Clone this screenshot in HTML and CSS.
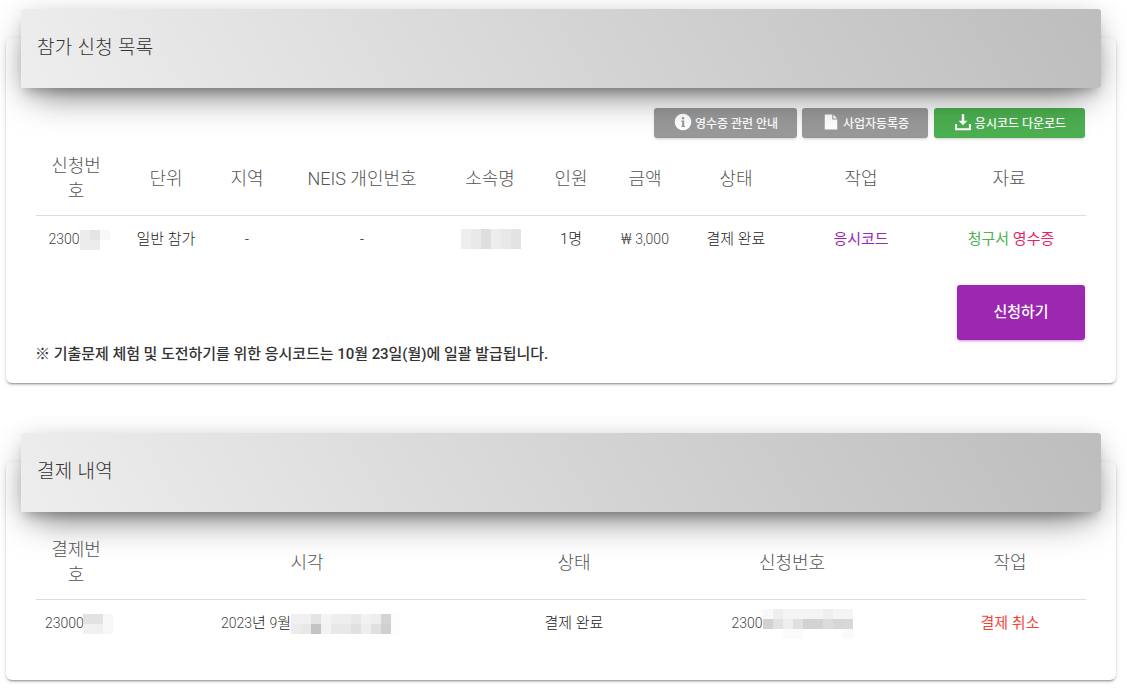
FILE: index.html
```html
<!DOCTYPE html>
<html lang="ko">
<head>
<meta charset="utf-8">
<title>참가 신청 목록</title>
<link rel="stylesheet" href="styles.css">
</head>
<body>
<main class="page">
  <section class="card card-first">
    <header class="card-header"><h2>참가 신청 목록</h2></header>
    <div class="card-body">
      <div class="toolbar">
        <button class="btn btn-gray btn-a">
          <svg class="icon" viewBox="0 0 24 24"><path fill="#fff" fill-rule="evenodd" d="M12 2a10 10 0 1 0 0 20 10 10 0 0 0 0-20zm1.500 5.400a1.500 1.500 0 1 1-3 0 1.500 1.500 0 0 1 3 0zM10 10.300h3.400v6.200h1v1.400H10v-1.400h1v-4.800h-1z"/></svg><span>영수증 관련 안내</span></button>
        <button class="btn btn-gray btn-b">
          <svg class="icon" viewBox="0 0 24 24"><path fill="#fff" d="M4.500 3h9v6h6v12h-15zM14.800 3l4.700 4.700h-4.700z"/></svg><span>사업자등록증</span></button>
        <button class="btn btn-green btn-c">
          <svg class="icon" viewBox="0 0 24 24"><path fill="#fff" d="M10.500 2.500h3v8h3.800L12 16 6.700 10.500h3.800zM2.500 14.500h2.400v5.100h14.200v-5.100h2.400v7.500h-19z"/></svg><span>응시코드 다운로드</span></button>
      </div>
      <table class="table table-apply">
        <colgroup>
          <col class="a1"><col class="a2"><col class="a3"><col class="a4"><col class="a5"><col class="a6"><col class="a7"><col class="a8"><col class="a9"><col class="a10">
        </colgroup>
        <thead>
          <tr><th>신청번호</th><th>단위</th><th>지역</th><th>NEIS 개인번호</th><th>소속명</th><th>인원</th><th>금액</th><th>상태</th><th>작업</th><th>자료</th></tr>
        </thead>
        <tbody>
          <tr>
            <td class="shift"><span class="num">2300</span><svg class="blur" width="30" height="20" viewBox="0 0 3 2"><rect width="2" height="2" fill="#ececec"/><rect x="1" width="1" height="1" fill="#e4e4e4"/><rect x="2" width="1" height="1" fill="#f8f8f8"/></svg></td>
            <td>일반 참가</td>
            <td>-</td>
            <td>-</td>
            <td><svg class="blur blur-org" width="60" height="20" viewBox="0 0 6 2"><rect width="6" height="2" fill="#eeeeee"/><rect x="1" width="1" height="2" fill="#e9e9e9"/><rect x="2" width="1" height="2" fill="#dedede"/><rect x="3" width="1" height="2" fill="#ededed"/><rect x="4" width="1" height="2" fill="#e8e8e8"/><rect x="5" width="1" height="2" fill="#e3e3e3"/></svg></td>
            <td>1명</td>
            <td><span class="num">₩ 3,000</span></td>
            <td>결제 완료</td>
            <td><a class="link purple">응시코드</a></td>
            <td class="shift-docs"><a class="link green">청구서</a> <a class="link pink">영수증</a></td>
          </tr>
        </tbody>
      </table>
      <div class="apply-row">
        <p class="notice">※ 기출문제 체험 및 도전하기를 위한 응시코드는 10월 23일(월)에 일괄 발급됩니다.</p>
        <button class="btn-apply">신청하기</button>
      </div>
    </div>
  </section>

  <section class="card card-second">
    <header class="card-header"><h2>결제 내역</h2></header>
    <div class="card-body body-second">
      <table class="table table-pay">
        <colgroup>
          <col class="p1"><col class="p2"><col class="p3"><col class="p4"><col class="p5">
        </colgroup>
        <thead>
          <tr><th>결제번호</th><th>시각</th><th>상태</th><th>신청번호</th><th>작업</th></tr>
        </thead>
        <tbody>
          <tr>
            <td class="shift"><span class="num">2300</span><span class="num clip">0</span><svg class="blur" width="30" height="20" viewBox="0 0 3 2"><rect width="3" height="2" fill="#f0f0f0"/><rect width="2" height="1" fill="#e2e2e2"/><rect x="2" width="1" height="2" fill="#f8f8f8"/></svg></td>
            <td class="shift-time"><span class="num">2023</span>년 <span class="num">9</span>월<svg class="blur" width="110" height="20" viewBox="0 0 11 2"><rect width="11" height="2" fill="#fdfdfd"/><rect width="10" height="1" fill="#eeeeee"/><rect width="2" height="1" fill="#f0f0f0"/><rect x="2" width="1" height="1" fill="#e4e4e4"/><rect x="3" width="1" height="1" fill="#f4f4f4"/><rect x="6" width="1" height="1" fill="#e8e8e8"/><rect x="7" width="1" height="1" fill="#f2f2f2"/><rect x="9" width="1" height="1" fill="#d4d4d4"/><rect y="1" width="1" height="1" fill="#ececec"/><rect x="1" y="1" width="1" height="1" fill="#e8e8e8"/><rect x="2" y="1" width="1" height="1" fill="#c4c4c4"/><rect x="3" y="1" width="1" height="1" fill="#f2f2f2"/><rect x="4" y="1" width="2" height="1" fill="#e8e8e8"/><rect x="6" y="1" width="1" height="1" fill="#e0e0e0"/><rect x="7" y="1" width="1" height="1" fill="#eeeeee"/><rect x="8" y="1" width="1" height="1" fill="#e0e0e0"/><rect x="9" y="1" width="1" height="1" fill="#d0d0d0"/></svg></td>
            <td>결제 완료</td>
            <td><span class="num">2300</span><svg class="blur blur-tall" width="90" height="30" viewBox="0 0 9 3"><rect width="9" height="1" fill="#f4f4f4"/><rect width="1" height="1" fill="#f8f8f8"/><rect x="1" width="1" height="1" fill="#eeeeee"/><rect x="6" width="1" height="1" fill="#eeeeee"/><rect y="1" width="1" height="1" fill="#d2d2d2"/><rect x="1" y="1" width="1" height="1" fill="#e2e2e2"/><rect x="2" y="1" width="1" height="1" fill="#eeeeee"/><rect x="3" y="1" width="1" height="1" fill="#e0e0e0"/><rect x="4" y="1" width="2" height="1" fill="#d2d2d2"/><rect x="6" y="1" width="1" height="1" fill="#dcdcdc"/><rect x="7" y="1" width="1" height="1" fill="#d6d6d6"/><rect x="8" y="1" width="1" height="1" fill="#d8d8d8"/><rect y="2" width="9" height="1" fill="#fff"/><rect x="2" y="2" width="2" height="1" fill="#fbfbfb"/><rect x="8" y="2" width="1" height="1" fill="#fafafa"/></svg></td>
            <td><a class="link red">결제 취소</a></td>
          </tr>
        </tbody>
      </table>
    </div>
  </section>
</main>
</body>
</html>
```

FILE: styles.css
```css
* { box-sizing: border-box; }

html, body { margin: 0; background: #fff; }

body {
  font-family: Roboto, "Noto Sans CJK KR", sans-serif;
  color: #3c4858;
  font-size: 14px;
}

.page {
  padding: 38px 11px 17px 6px;
  display: flex;
  flex-direction: column;
  gap: 79px;
}

.card {
  background: #fff;
  border-radius: 6px;
  box-shadow: 0 2px 2px 0 rgba(0,0,0,.14), 0 3px 1px -2px rgba(0,0,0,.2), 0 1px 5px 0 rgba(0,0,0,.12);
}

.card-first { height: 345px; }
.card-second { height: 218px; }

.card-header {
  margin: -29px 15px 0;
  height: 79px;
  padding: 0 16px 1px;
  display: flex;
  align-items: center;
  border-radius: 3px;
  background: linear-gradient(60deg, #eeeeee, #bdbdbd);
  box-shadow: 0 16px 38px -12px rgba(0,0,0,.56), 0 4px 25px 0 rgba(0,0,0,.12), 0 8px 10px -5px rgba(0,0,0,.2);
  position: relative;
}

.card-header h2 {
  margin: 0;
  font-size: 19px;
  font-weight: 300;
  letter-spacing: .3px;
  line-height: 24px;
  color: #333;
}

.card-body { padding: 20px 30px 0; }
.body-second { padding-top: 10px; }

.toolbar {
  display: flex;
  justify-content: flex-end;
  gap: 5px;
  padding-right: 1px;
  height: 30px;
}

.btn {
  height: 30px;
  border: 0;
  border-radius: 3px;
  color: #fff;
  font: 500 12px Roboto, "Noto Sans CJK KR", sans-serif;
  display: flex;
  align-items: center;
  justify-content: center;
  padding: 0 0 2px;
  box-shadow: 0 2px 2px 0 rgba(153,153,153,.14), 0 3px 1px -2px rgba(153,153,153,.2), 0 1px 5px 0 rgba(153,153,153,.12);
}

.btn-gray { background: #999; }
.btn-green { background: #4caf50; margin-left: 1px; }
.btn-a { width: 143px; }
.btn-b { width: 126px; }
.btn-c { width: 151px; }

.icon { width: 20px; height: 20px; margin-right: 2px; flex: none; }

.table {
  width: 1050px;
  table-layout: fixed;
  border-collapse: collapse;
}

.a1, .p1 { width: 80px; }
.a2 { width: 100px; }
.a3 { width: 62px; }
.a4 { width: 168px; }
.a5 { width: 88px; }
.a6, .a7 { width: 74px; }
.a8 { width: 108px; }
.a9 { width: 142px; }
.a10 { width: 154px; }
.p2 { width: 382px; }
.p3 { width: 152px; }
.p4 { width: 284px; }
.p5 { width: 152px; }

.table th {
  font-size: 18px;
  font-weight: 300;
  line-height: 25px;
  color: #555;
  text-align: center;
  padding: 15px 8px 12px;
  border-bottom: 1px solid #ddd;
}

.table td {
  text-align: center;
  padding: 12px 0;
  height: 46px;
  font-size: 15px;
  font-weight: 300;
  line-height: 22px;
  color: #222;
  white-space: nowrap;
}

.table td.shift { padding-left: 6px; }
.table td.shift-time { padding-left: 8px; }
.table td.shift-docs { padding-left: 4px; }

.num { font-size: 14px; color: #444; }

.clip { display: inline-block; width: 7px; overflow: hidden; vertical-align: bottom; }

.blur { vertical-align: middle; }
.blur-org { margin-left: 2px; position: relative; top: -1px; }
.blur-tall { margin: -5px 0; }

.link { font-weight: 400; }
.purple { color: #9c27b0; }
.green { color: #4caf50; }
.pink { color: #e91e63; }
.red { color: #f44336; }

.apply-row {
  display: flex;
  justify-content: space-between;
  align-items: flex-end;
  margin-top: 23px;
}

.notice {
  margin: 0 0 0 -1px;
  font-size: 15px;
  font-weight: 500;
  letter-spacing: -.04px;
  line-height: 20px;
  color: #333;
  position: relative;
  top: 24px;
}

.btn-apply {
  width: 128px;
  height: 55px;
  margin-right: 1px;
  border: 0;
  border-radius: 3px;
  padding: 0 0 4px;
  background: #9c27b0;
  color: #fff;
  font: 500 15px Roboto, "Noto Sans CJK KR", sans-serif;
  box-shadow: 0 2px 2px 0 rgba(156,39,176,.14), 0 3px 1px -2px rgba(156,39,176,.2), 0 1px 5px 0 rgba(156,39,176,.12);
}
```
